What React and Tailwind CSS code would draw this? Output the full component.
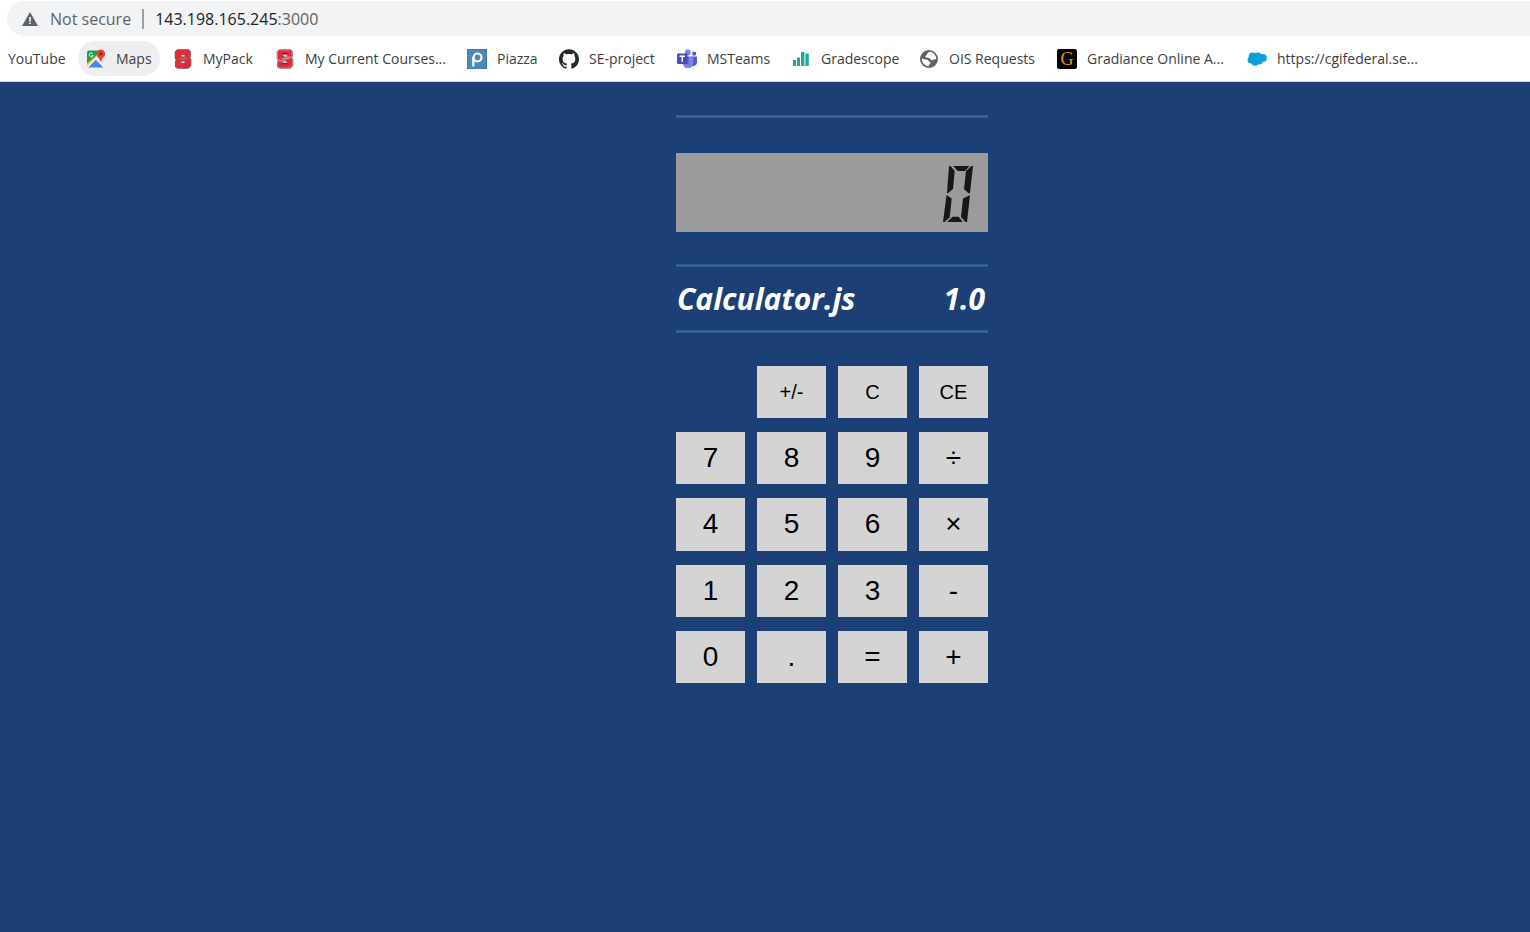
import { useState } from "react";
import { SiGithub } from "react-icons/si";

function MapsIcon() {
  return (
    <svg viewBox="0 0 20 20" className="size-5 shrink-0" aria-hidden="true">
      <path d="M1 3.500a2 2 0 0 1 2-2h10L10 10l-9 8z" fill="#1e9d58" />
      <path d="M1 14.500L12 5l1.500 2.500L3 18.500H1z" fill="#fbc934" />
      <path d="M2 18.500L9.500 10.500l8 8z" fill="#4285f4" />
      <path d="M1.500 18L10.500 9l8 9.500" fill="none" stroke="#f4f6f8" strokeWidth="1.600" />
      <path d="M12 9.500l5.500 6.500v-6z" fill="#dfe3e8" />
      <path d="M14.800 0.500a4.300 4.300 0 0 0-4.300 4.300c0 3 3.300 4 4.300 8.700 1-4.700 4.300-5.700 4.300-8.700A4.300 4.300 0 0 0 14.800 .5z" fill="#ea4335" />
      <circle cx="14.800" cy="4.800" r="1.500" fill="#7b231c" />
      <path d="M6.800 4.600a2 2 0 1 0 .5 1.900H5.500" fill="none" stroke="#fff" strokeWidth="0.900" />
    </svg>
  );
}

function BlockSIcon({ outlined }) {
  const letter =
    "M4.500 1h11L17 2.500v5.500h-4.500V6.500L11.500 5.500h-3L7.500 6.300v1l1 .9h6.500l2.500 2.300v6L15 19H5l-2.200-1.500v-5.500H7.500v1.500l1 1h3l1-1v-1l-1-.9H5L2.500 9.500V3z";
  return (
    <svg viewBox="0 0 20 20" className="size-5 shrink-0" aria-hidden="true">
      <path d={letter} fill="#e8273a" stroke="#5d6163" strokeWidth="1.600" strokeLinejoin="round" />
      <path d={letter} fill="#e8273a" stroke={outlined ? "#f0b9be" : "#dc3440"} strokeWidth="0.500" />
      <path
        d="M7.200 4.600h5.200M7 6.500l1.500 1.700M7.500 14.700h5M13 12.500l-1.500-.9"
        fill="none"
        stroke={outlined ? "#232a2e" : "#9d5550"}
        strokeWidth="1"
      />
      <path d="M6.500 9.800h8" stroke={outlined ? "#f6dede" : "#ef7f80"} strokeWidth="0.700" />
    </svg>
  );
}

function PiazzaIcon() {
  return (
    <svg viewBox="0 0 20 20" className="size-5 shrink-0" aria-hidden="true">
      <rect width="20" height="20" fill="#3e7aab" />
      <rect x="1" y="1" width="18" height="18" fill="#4a89ba" />
      <circle cx="10.500" cy="8.500" r="4" fill="none" stroke="#fff" strokeWidth="2.200" />
      <path d="M6.300 8v9.500" stroke="#fff" strokeWidth="2.200" />
    </svg>
  );
}

function TeamsIcon() {
  return (
    <svg viewBox="0 0 20 20" className="size-5 shrink-0" aria-hidden="true">
      <circle cx="10.800" cy="3.500" r="2.900" fill="#7b83eb" />
      <circle cx="17.200" cy="4.700" r="2.100" fill="#5059c9" />
      <path d="M14 7.500h6v6a3.500 3.500 0 0 1-4 3.400h-2z" fill="#5059c9" />
      <path d="M6 7.500h10.300v6.500a5.200 5.200 0 0 1-10.300 1z" fill="#7b83eb" />
      <path d="M7 7.500h4.700v8H7z" fill="#5b62c4" />
      <rect x="0" y="4.500" width="10.500" height="10.500" rx="1" fill="#464eb8" />
      <path d="M2.500 7.300h5.500M5.250 7.300v5.500" stroke="#fff" strokeWidth="1.500" fill="none" />
    </svg>
  );
}

function GradescopeIcon() {
  return (
    <svg viewBox="0 0 20 20" className="size-5 shrink-0" aria-hidden="true" fill="#1fa6a3">
      <rect x="2" y="11" width="3" height="6" />
      <rect x="6" y="8.500" width="3" height="8.500" />
      <rect x="10" y="3" width="3.400" height="14" />
      <rect x="14.400" y="4.500" width="3.400" height="12.500" />
    </svg>
  );
}

function GlobeIcon() {
  return (
    <svg viewBox="0 0 20 20" className="size-5 shrink-0" aria-hidden="true">
      <circle cx="10" cy="10" r="9" fill="#5f6368" />
      <path d="M11.500 2.800c-1.700.2-3 .9-3.200 2-.1.800-.3 1.300-1.300 1.600-1 .5-.8 1.900.3 2.100 1.800.2 3.200.1 3.900 1.400.8 1.500 2.400 1.500 3.200.8.700-.6 1.800-.5 2.800-.5a7.200 7.200 0 0 0-5.700-7.400z" fill="#fff" />
      <path d="M2.800 9.500c1.500.8 3.700 1 5.300 1.300 1.600.3 1.500 1.500 2.600 1.900 1.400.5 1 1.600.1 2.200-.9.600-1.100 1.300-1.300 2.500A7.400 7.400 0 0 1 2.800 9.500z" fill="#fff" />
    </svg>
  );
}

function GradianceIcon() {
  return (
    <span className="flex size-5 shrink-0 items-center justify-center rounded-xs bg-black font-['Liberation_Serif',serif] text-lg leading-5 text-[#f5901e]">
      G
    </span>
  );
}

function CloudIcon() {
  return (
    <svg viewBox="0 0 20 20" className="size-5 shrink-0" aria-hidden="true" fill="#0d9ddb">
      <circle cx="5.700" cy="7.500" r="4" />
      <circle cx="10.800" cy="7.200" r="3.700" />
      <circle cx="15.700" cy="9" r="4.100" />
      <circle cx="4.200" cy="11" r="3.600" />
      <circle cx="8" cy="13" r="3.700" />
      <circle cx="12" cy="12" r="3.600" />
    </svg>
  );
}

const bookmarks = [
  { label: "YouTube", width: "w-[73px]" },
  { label: "Maps", width: "w-[82px]", icon: <MapsIcon />, active: true },
  { label: "MyPack", width: "w-[97px]", icon: <BlockSIcon /> },
  { label: "My Current Courses...", width: "w-[187px]", icon: <BlockSIcon outlined /> },
  { label: "Piazza", width: "w-[87px]", icon: <PiazzaIcon /> },
  { label: "SE-project", width: "w-[113px]", icon: <SiGithub className="size-5 shrink-0 text-[#24292e]" /> },
  { label: "MSTeams", width: "w-[109px]", icon: <TeamsIcon /> },
  { label: "Gradescope", width: "w-[123px]", icon: <GradescopeIcon /> },
  { label: "OIS Requests", width: "w-[133px]", icon: <GlobeIcon /> },
  { label: "Gradiance Online A...", width: "w-[185px]", icon: <GradianceIcon /> },
  { label: "https://cgifederal.se...", width: "w-[188px]", icon: <CloudIcon /> },
];

function BrowserChrome() {
  return (
    <header className="border-b border-[#cfd8dc] bg-white pt-px font-['Open_Sans',sans-serif]">
      <div className="ml-[7px] flex h-[35px] items-center rounded-l-full bg-[#f1f3f4] pl-[15px] text-base text-[#5f6368]">
        <svg viewBox="0 0 16 14" className="mr-3 h-[14px] w-4" aria-hidden="true">
          <path d="M8 0l8 14H0z" fill="#5f6368" />
          <path d="M7.200 5h1.600v4.500H7.200zM7.200 10.500h1.600V12H7.200z" fill="#fff" />
        </svg>
        <span>Not secure</span>
        <span className="mx-[11px] h-5 w-0.5 bg-[#9aa0a6]" />
        <span>
          <span className="text-[#202124]">143.198.165.245</span>:3000
        </span>
      </div>
      <nav aria-label="Bookmarks" className="flex gap-[5px] overflow-hidden py-[5px]">
        {bookmarks.map((b) => (
          <a
            key={b.label}
            href="#"
            className={`flex h-[35px] shrink-0 items-center gap-[10px] rounded-full pl-2 text-sm whitespace-nowrap text-[#3c4043] ${b.width} ${b.active ? "bg-[#efefef]" : ""}`}
          >
            {b.icon}
            {b.label}
          </a>
        ))}
      </nav>
    </header>
  );
}

const segments = {
  a: "M10.300 0H26.500L22 5H14.700z",
  f: "M6 0H7.500L11.700 5L10 23L4.800 27.300L4 27z",
  b: "M30 0H28.500L23 5L21 23L25.500 27.300L27 27z",
  g: "M5.500 28.300L10.500 25H20L25 28.300L20 31.500H10z",
  e: "M4.300 29.500L8.700 32.500L6.700 51.500L1.500 56H0L3.500 29.300z",
  c: "M26.300 29.500L20 32.500L18 51L22.500 56H24L27 29.300z",
  d: "M4 56L9.700 50.700H15.700L19.700 56z",
};

const digitSegments = {
  0: "abcdef",
  1: "bc",
  2: "abged",
  3: "abgcd",
  4: "fgbc",
  5: "afgcd",
  6: "afgedc",
  7: "abc",
  8: "abcdefg",
  9: "abcdfg",
  "-": "g",
};

function Digit({ char }) {
  if (char === ".") {
    return (
      <svg viewBox="0 0 6 56" className="h-14 w-1.5" aria-hidden="true">
        <path d="M0 51h5v5H0z" fill="#171717" />
      </svg>
    );
  }
  return (
    <svg viewBox="0 0 30 56" className="h-14 w-[30px]" aria-hidden="true" fill="#171717">
      {[...(digitSegments[char] ?? "")].map((s) => (
        <path key={s} d={segments[s]} />
      ))}
    </svg>
  );
}

const keys = [
  "+/-", "C", "CE",
  "7", "8", "9", "÷",
  "4", "5", "6", "×",
  "1", "2", "3", "-",
  "0", ".", "=", "+",
];

function compute(a, op, b) {
  if (op === "+") return a + b;
  if (op === "-") return a - b;
  if (op === "×") return a * b;
  return a / b;
}

function Rule() {
  return <div className="h-[3px] border-y border-[#2f5893] bg-[#3f68a2]" />;
}

function Calculator() {
  const [value, setValue] = useState("0");
  const [pending, setPending] = useState(null);
  const [fresh, setFresh] = useState(true);

  const press = (key) => {
    if (/[0-9.]/.test(key)) {
      if (key === "." && value.includes(".") && !fresh) return;
      setValue(fresh ? (key === "." ? "0." : key) : (value + key).slice(0, 8));
      setFresh(false);
    } else if (key === "C" || key === "CE") {
      setValue("0");
      setFresh(true);
      if (key === "C") setPending(null);
    } else if (key === "+/-") {
      setValue(String(-Number(value)));
    } else {
      const result = pending ? compute(pending.left, pending.op, Number(value)) : Number(value);
      setValue(String(result).slice(0, 8));
      setPending(key === "=" ? null : { left: result, op: key });
      setFresh(true);
    }
  };

  return (
    <section aria-label="Calculator" className="mx-auto w-[312px] pt-[33px]">
      <Rule />
      <div
        role="status"
        aria-label={value}
        className="mt-[35px] mb-[32px] flex h-[79px] items-center justify-end gap-1 bg-[#9b9b9b] pt-[3px] pr-[15px]"
      >
        {[...value].map((c, i) => (
          <Digit key={i} char={c} />
        ))}
      </div>
      <Rule />
      <h1 className="flex h-[63px] items-center justify-between pr-[3px] pl-px font-['Open_Sans',sans-serif] text-3xl font-bold text-white italic">
        <span>Calculator.js</span>
        <span>1.0</span>
      </h1>
      <Rule />
      <div className="mt-[33px] grid h-[317px] grid-cols-4 grid-rows-5 gap-x-3 gap-y-[14px] font-['Liberation_Sans',Arial,sans-serif]">
        {keys.map((key) => (
          <button
            key={key}
            type="button"
            onClick={() => press(key)}
            className={`bg-[#d4d4d4] text-black hover:bg-[#c8c8c8] ${
              key === "+/-" ? "col-start-2 text-xl" : key === "C" || key === "CE" ? "text-xl" : "text-[28px]"
            }`}
          >
            {key}
          </button>
        ))}
      </div>
    </section>
  );
}

export default function App() {
  return (
    <div className="flex min-h-screen flex-col bg-[#1c4076]">
      <BrowserChrome />
      <main className="grow pb-8 pl-[134px]">
        <Calculator />
      </main>
    </div>
  );
}
